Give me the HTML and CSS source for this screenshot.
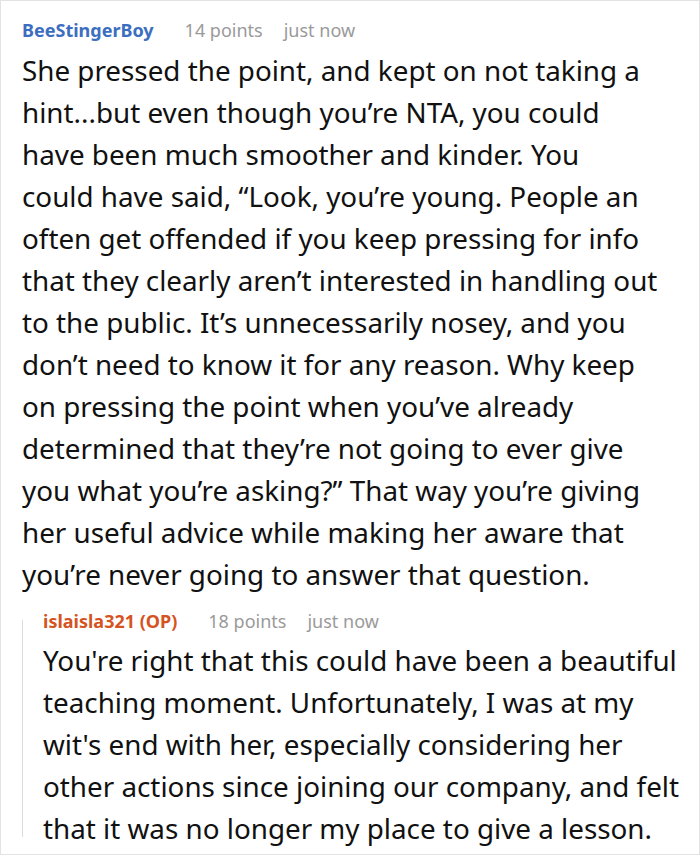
FILE: index.html
```html
<!DOCTYPE html>
<html>
<head>
<meta charset="utf-8">
<link rel="stylesheet" href="styles.css">
</head>
<body>
<div class="card">
  <div class="comment">
    <div class="meta">
      <span class="author">BeeStingerBoy</span>
      <span class="info">14 points</span>
      <span class="info">just now</span>
    </div>
    <p class="text main">She pressed the point, and kept on not taking a<br>
hint...but even though you’re NTA, you could<br>
have been much smoother and kinder. You<br>
could have said, “Look, you’re young. People an<br>
often get offended if you keep pressing for info<br>
that they clearly aren’t interested in handling out<br>
to the public. It’s unnecessarily nosey, and you<br>
don’t need to know it for any reason. Why keep<br>
on pressing the point when you’ve already<br>
determined that they’re not going to ever give<br>
you what you’re asking?” That way you’re giving<br>
her useful advice while making her aware that<br>
you’re never going to answer that question.</p>
    <div class="reply">
      <div class="meta">
        <span class="author op">islaisla321 (OP)</span>
        <span class="info">18 points</span>
        <span class="info">just now</span>
      </div>
      <p class="text">You're right that this could have been a beautiful teaching moment. Unfortunately, I was at my wit's end with her, especially considering her other actions since joining our company, and felt that it was no longer my place to give a lesson.</p>
    </div>
  </div>
</div>
</body>
</html>
```
FILE: styles.css
```css
html, body {
  margin: 0;
  padding: 0;
  background: #fff;
}
.card {
  width: 700px;
  height: 855px;
  box-sizing: border-box;
  border: 1px solid #e3e3e3;
  overflow: hidden;
  font-family: "Noto Sans", "Open Sans", sans-serif;
}
.comment {
  padding: 15px 14px 0 21px;
}
.meta {
  display: flex;
  font-size: 18px;
  line-height: 28px;
  height: 28px;
}
.author {
  color: #3c6ebf;
  font-weight: 700;
  margin-right: 31px;
}
.author.op {
  color: #d5531f;
}
.info {
  color: #9a9a9a;
}
.meta .info + .info {
  margin-left: 21px;
}
.text {
  margin: 5px 0 0 0;
  font-size: 27.8px;
  line-height: 42px;
  color: #111;
}
.text.main {
  white-space: nowrap;
}
.reply {
  position: relative;
  margin-top: 12px;
  padding-left: 21px;
}
.reply::before {
  content: "";
  position: absolute;
  left: 0;
  top: 13px;
  bottom: 12px;
  width: 1px;
  background: #dcdcdc;
}
.reply .text {
  margin-top: 4px;
}
```
